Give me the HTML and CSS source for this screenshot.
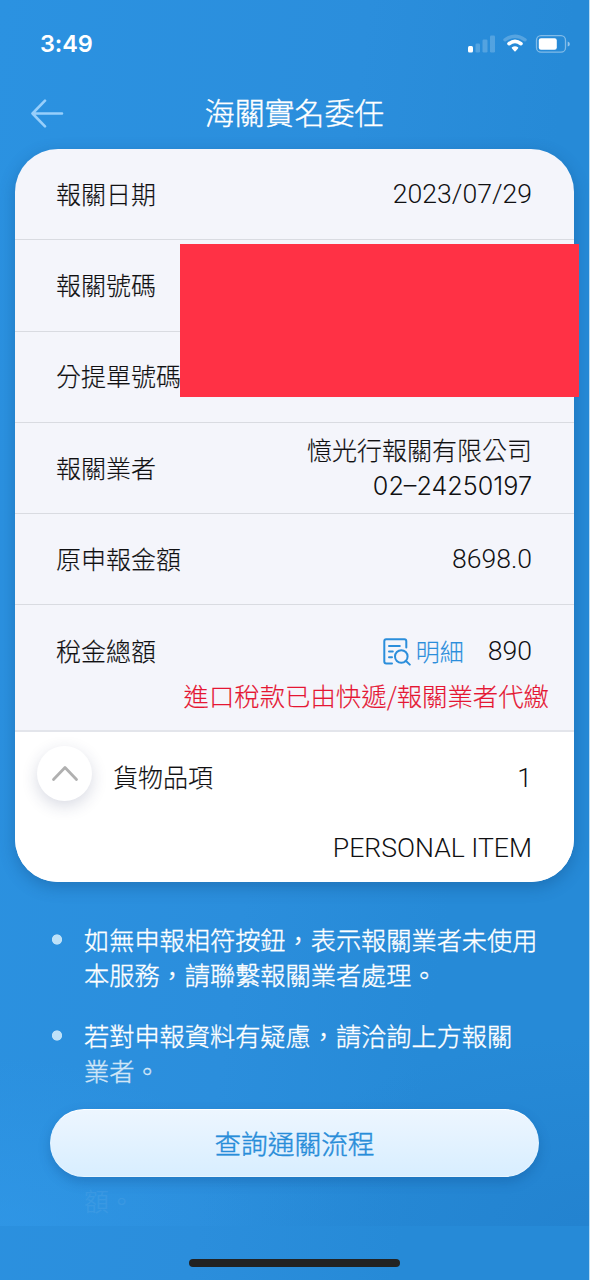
FILE: index.html
```html
<!DOCTYPE html>
<html lang="zh-Hant">
<head>
<meta charset="utf-8">
<title>海關實名委任</title>
<link rel="stylesheet" href="styles.css">
</head>
<body>
<div class="screen">
  <div class="statusbar">
    <span class="clock">3:49</span>
    <svg class="status-icons" width="106" height="22" viewBox="0 0 106 22">
      <g fill="#fff">
        <rect x="1" y="13" width="5" height="6.500" rx="1.500"/>
        <g opacity=".2">
          <rect x="8.500" y="10.500" width="4.500" height="9" rx="1.300"/>
          <rect x="15.500" y="6.500" width="5" height="13" rx="1.300"/>
          <rect x="23" y="2.500" width="5" height="17" rx="1.300"/>
        </g>
        <path d="M45 14.300q3-2 6 0 .7.600 0 1.200l-2.400 2.800q-.6.600-1.200 0L45 15.500q-.7-.6 0-1.200z"/>
      </g>
      <path d="M42 10.700q6-4.500 12 0" fill="none" stroke="#fff" stroke-width="3.600" stroke-linecap="round"/>
      <path d="M38 6.800q10-7.200 20 0" fill="none" stroke="#fff" stroke-opacity=".22" stroke-width="3.400" stroke-linecap="round"/>
      <rect x="69.500" y="2.700" width="29" height="16.500" rx="4.500" fill="none" stroke="#fff" stroke-opacity=".42" stroke-width="1.300"/>
      <rect x="71.800" y="5.200" width="18" height="11.500" rx="2.200" fill="#fff"/>
      <path d="M100.700 8.600q2.200.5 2.200 2.500t-2.200 2.500z" fill="#fff" fill-opacity=".5"/>
    </svg>
  </div>

  <header class="titlebar">
    <svg class="back" width="34" height="30" viewBox="0 0 34 30" fill="none" stroke="#98cffb" stroke-width="2.600" stroke-linecap="round" stroke-linejoin="round">
      <path d="M32 14.500H2.500M15 1.700 2.500 14.500 15 27.300"/>
    </svg>
    <h1 class="title">海關實名委任</h1>
  </header>

  <main class="card">
    <div class="row"><span>報關日期</span><span class="num">2023/07/29</span></div>
    <div class="row"><span>報關號碼</span></div>
    <div class="row"><span>分提單號碼</span></div>
    <div class="row">
      <span>報關業者</span>
      <div class="broker"><span>憶光行報關有限公司</span><span class="phone">02–24250197</span></div>
    </div>
    <div class="row"><span>原申報金額</span><span class="num">8698.0</span></div>
    <div class="tax">
      <div class="tax-line">
        <span>稅金總額</span>
        <div class="tax-value">
          <span class="detail">
            <svg width="28" height="28" viewBox="0 0 28 28" fill="none" stroke="#2b8edb" stroke-width="2" stroke-linecap="round" stroke-linejoin="round">
              <path d="M23.300 9.500V3.200Q23.300 1.300 21.400 1.300H3.200Q1.300 1.300 1.300 3.200v20.300q0 2 2 2H9"/>
              <path d="M6 8h10.800M6 13.500h3.800M6 19.300h3"/>
              <circle cx="18.300" cy="18.500" r="6.300"/>
              <path d="m22.800 22.800 4 3.800"/>
            </svg>
            <span>明細</span>
          </span>
          <span class="num">890</span>
        </div>
      </div>
      <p class="tax-note">進口稅款已由快遞/報關業者代繳</p>
    </div>
    <section class="items">
      <div class="items-head">
        <span class="toggle">
          <svg width="28" height="18" viewBox="0 0 28 18" fill="none" stroke="#b0b0b0" stroke-width="2.800" stroke-linecap="round" stroke-linejoin="round"><path d="M2.500 14.500 14 2.500l11.500 12"/></svg>
        </span>
        <span class="items-label">貨物品項</span>
        <span class="num">1</span>
      </div>
      <p class="item-name">PERSONAL ITEM</p>
    </section>
    <div class="redaction"></div>
  </main>

  <div class="lower">
    <ul class="notes">
      <li>如無申報相符按鈕，表示報關業者未使用<br>本服務，請聯繫報關業者處理。</li>
      <li>若對申報資料有疑慮，請洽詢上方報關<br><span class="fading">業者。</span></li>
    </ul>
    <button class="action" type="button">查詢通關流程</button>
    <p class="faded-note">額。</p>
  </div>
  <footer class="home-area"><span class="home-bar"></span></footer>
</div>
</body>
</html>
```

FILE: styles.css
```css
* { box-sizing: border-box; }
body { margin: 0; background: #b9dcf5; }
h1, p, ul { margin: 0; padding: 0; font-weight: inherit; }
.screen {
  width: 589px;
  height: 1280px;
  display: flex;
  flex-direction: column;
  background: linear-gradient(98deg, #2b92e1 0%, #2b8edc 48%, #268ad7 75%, #268ad7 100%);
  font-family: "Noto Sans CJK TC", sans-serif;
  font-weight: 300;
  font-size: 25px;
  line-height: 35px;
  color: #101012;
  -webkit-text-stroke: .15px currentColor;
  overflow: hidden;
}
.statusbar {
  height: 86px;
  padding: 1px 16px 0 40px;
  display: flex;
  align-items: center;
  justify-content: space-between;
  flex: none;
}
.clock { font-family: Inter, sans-serif; font-weight: 600; font-size: 23.500px; letter-spacing: -.1px; color: #fff; -webkit-text-stroke: 0; }
.titlebar {
  height: 63px;
  flex: none;
  padding: 0 30px;
  display: grid;
  grid-template-columns: 34px 1fr 34px;
  align-items: start;
}
.back { margin-top: 13px; }
.title { font-size: 29.900px; line-height: 44px; margin-top: 3px; color: #fff; text-align: center; -webkit-text-stroke-width: .35px; }
.card {
  position: relative;
  flex: none;
  width: 559px;
  height: 733px;
  margin-left: 15px;
  border-radius: 43px;
  background: #f4f5fb;
  box-shadow: 0 5px 16px rgba(10, 55, 105, .3);
  display: flex;
  flex-direction: column;
}
.row {
  height: 91.300px;
  flex: none;
  padding: 0 42px 2px 41px;
  border-bottom: 1px solid #d9dbe1;
  display: flex;
  align-items: center;
  justify-content: space-between;
}
.num, .item-name { font-family: Roboto, sans-serif; font-size: 26.600px; -webkit-text-stroke-width: 0; }
.broker { display: flex; flex-direction: column; align-items: flex-end; }
.phone { font-family: Inter, sans-serif; font-size: 25.200px; padding-top: 2px; margin-bottom: -2px; -webkit-text-stroke-width: 0; }
.tax {
  height: 127px;
  flex: none;
  border-bottom: 2px solid #e3e5eb;
  padding: 28px 25px 0 41px;
}
.tax-line { display: flex; justify-content: space-between; padding-right: 17px; height: 35px; }
.tax-value { display: flex; align-items: center; gap: 24px; }
.detail { display: flex; align-items: center; gap: 5px; color: #2b8edb; font-size: 24px; }
.detail svg { margin-top: 2px; }
.tax-note { text-align: right; color: #e51633; font-size: 25.400px; margin-top: 10px; }
.items { flex: 1; background: #fff; border-radius: 0 0 43px 43px; padding: 14px 42px 0 22px; }
.items-head { display: flex; align-items: flex-start; }
.toggle {
  width: 55px;
  height: 55px;
  border-radius: 50%;
  background: #fff;
  box-shadow: 0 5px 16px rgba(40, 50, 100, .18);
  display: flex;
  align-items: center;
  justify-content: center;
}
.items-label { margin: 13px auto 0 21px; }
.items-head .num { margin-top: 14px; }
.item-name { text-align: right; margin-top: 29px; }
.redaction {
  position: absolute;
  left: 165px;
  top: 95px;
  width: 399px;
  height: 153px;
  background: #ff3145;
}
.lower {
  height: 344px;
  flex: none;
  background:
    radial-gradient(ellipse 260px 170px at 0 100%, rgba(50, 154, 234, .55), transparent),
    radial-gradient(ellipse 330px 190px at 100% 100%, rgba(33, 126, 203, .6), transparent);
}
.notes {
  list-style: none;
  padding: 40px 0 0 52px;
  color: #fff;
  font-size: 25.200px;
  display: flex;
  flex-direction: column;
  gap: 26px;
  -webkit-text-stroke-width: .35px;
}
.notes li { padding-left: 32px; background: radial-gradient(circle at 5px 17.500px, #bee1f8 4.700px, transparent 5.500px); }
.fading { opacity: .78; }
.action {
  display: block;
  width: 489px;
  height: 68px;
  margin: 21px 0 0 50px;
  padding: 0;
  border: 1px solid #e8f5ff;
  border-top-color: #fff;
  border-radius: 34px;
  background: linear-gradient(#edf6ff, #d8eeff);
  box-shadow: 0 5px 12px rgba(10, 65, 125, .28);
  font: 300 26.700px/40px "Noto Sans CJK TC", sans-serif;
  -webkit-text-stroke: .45px currentColor;
  color: #288dd9;
}
.faded-note { padding: 6px 0 0 84px; color: #fff; opacity: .06; }
.home-area { flex: 1; display: flex; justify-content: center; align-items: flex-start; padding-top: 33px; }
.home-bar { width: 211px; height: 8px; border-radius: 4px; background: #222; }
```
